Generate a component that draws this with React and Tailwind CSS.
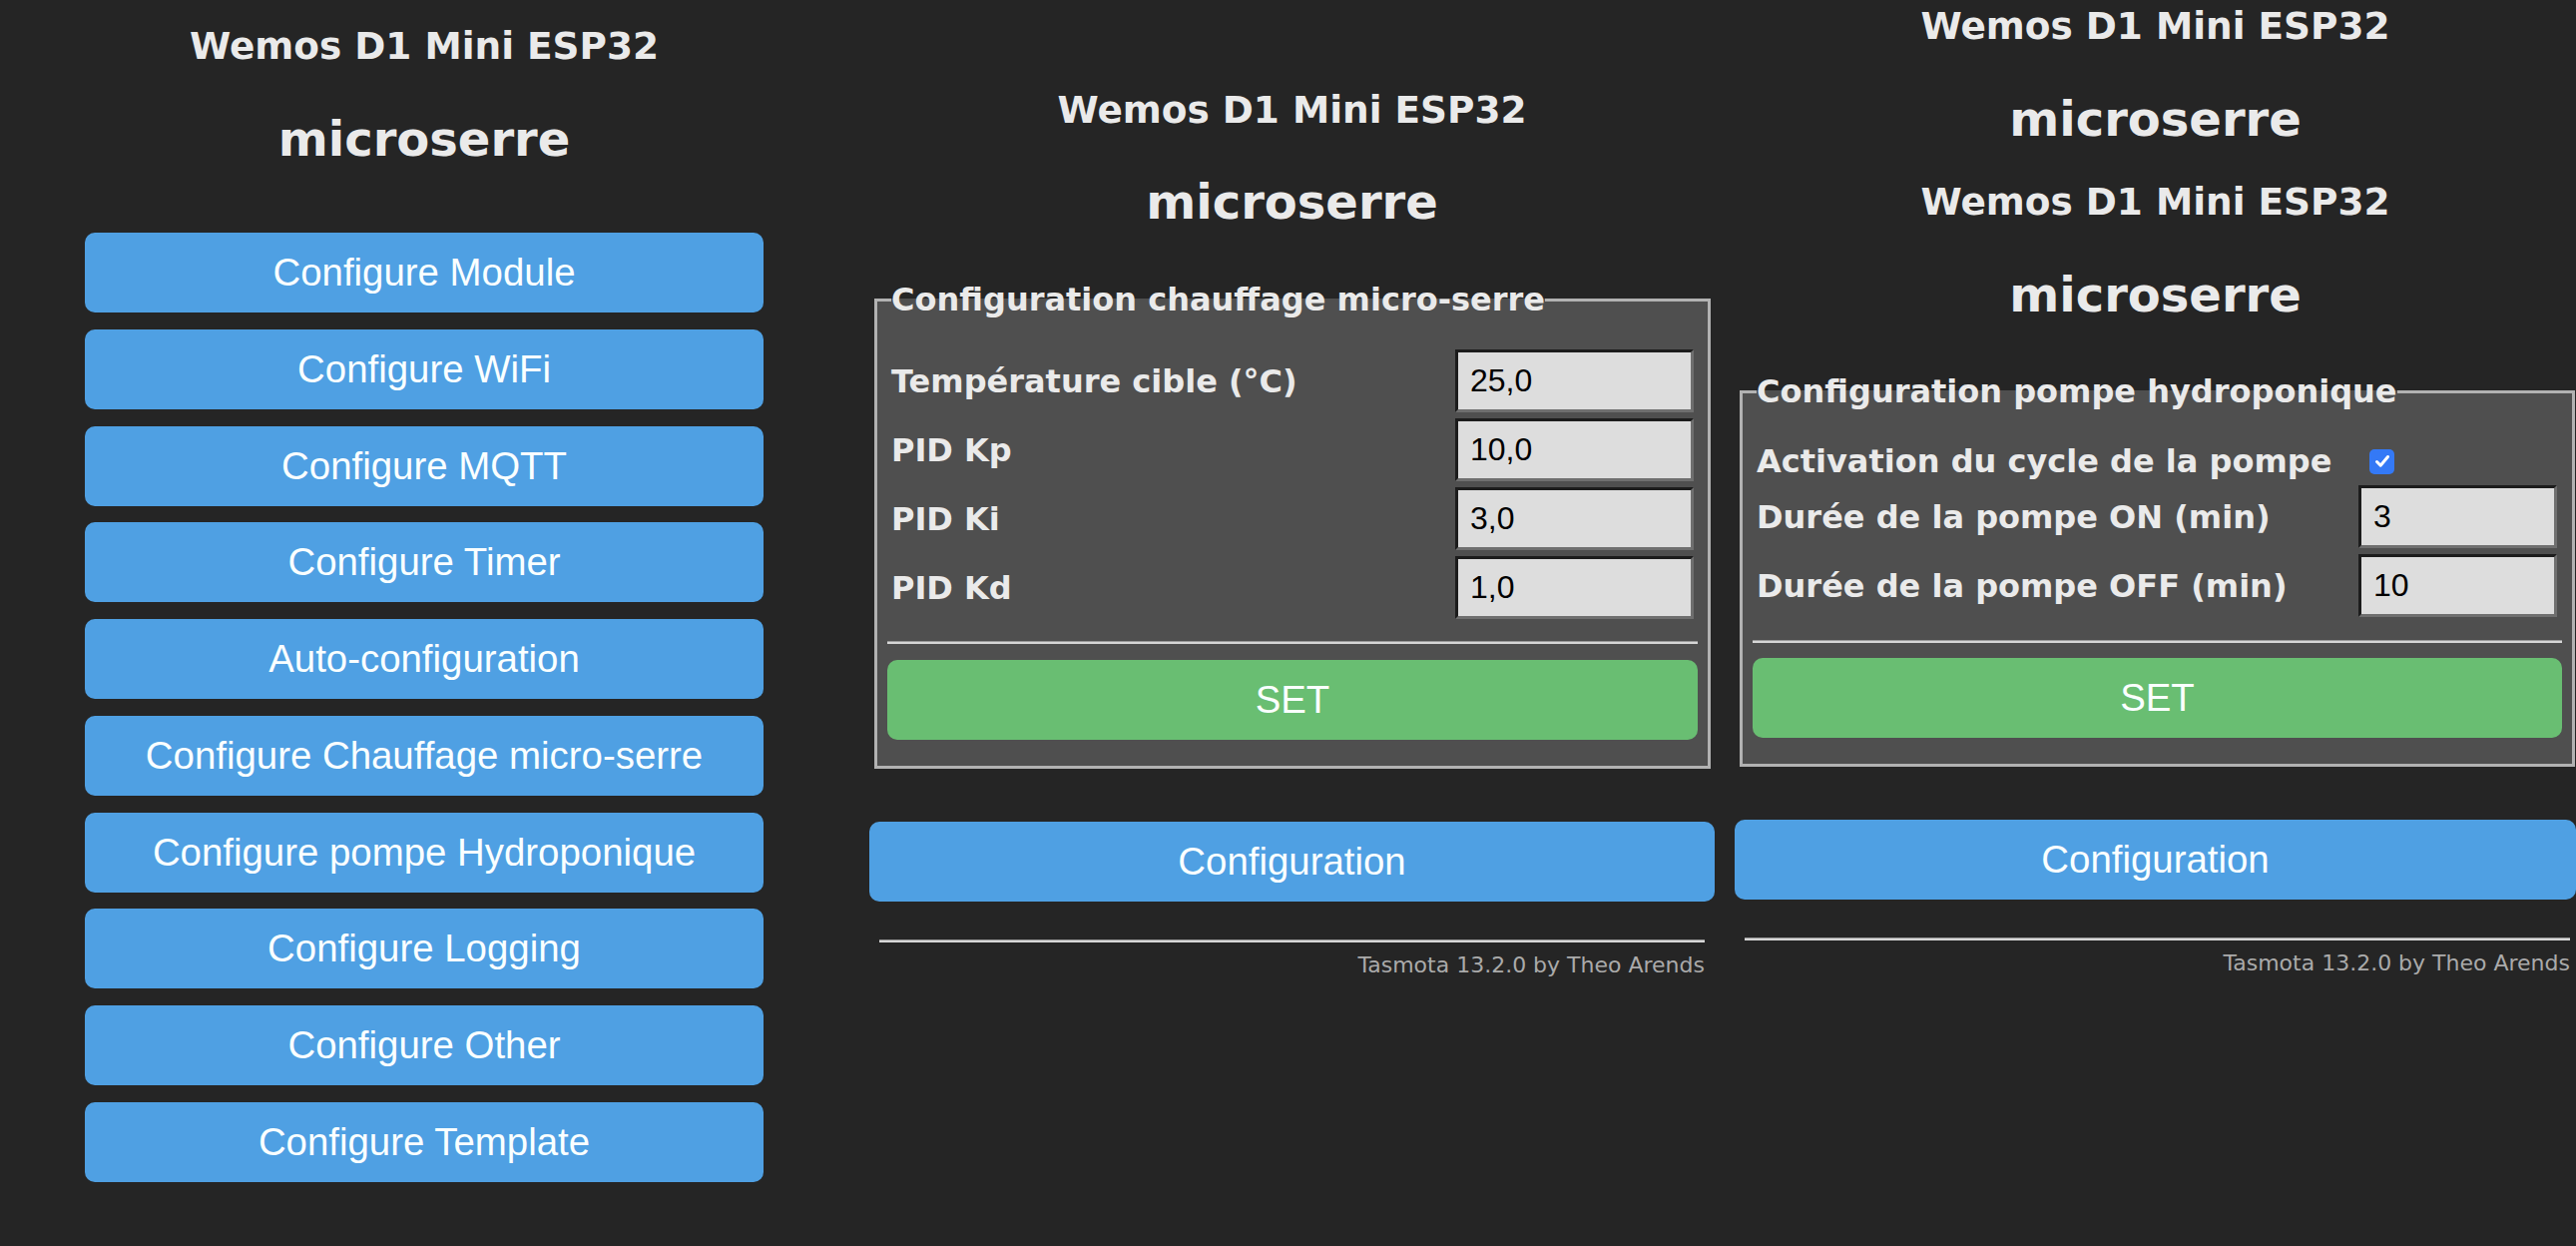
import React from 'react';

const Btn = ({ children, className = '' }) => (
    <button className={`block w-full h-[80px] rounded-[10px] text-[#faffff] text-[38.4px] font-['Liberation_Sans',Arial,sans-serif] ${className}`}>
        {children}
    </button>
);

const Title = ({ className = '' }) => (
    <div className={`h-[44px] leading-[44px] text-[37.44px] font-bold text-center whitespace-nowrap ${className}`}>
        Wemos D1 Mini ESP32
    </div>
);

const Name = ({ className = '' }) => (
    <div className={`h-[56px] leading-[56px] text-[48px] font-bold text-center ${className}`}>microserre</div>
);

const Field = ({ value, width }) => (
    <input
        readOnly
        defaultValue={value}
        className={`${width} h-[63px] shrink-0 bg-[#dddddd] text-black text-[32px] pl-[12px] font-['Liberation_Sans',Arial,sans-serif] border-[3px] border-t-[#1c1c1c] border-l-[#1c1c1c] border-r-[#6f6f6f] border-b-[#6f6f6f] outline-none`}
    />
);

const Rule = ({ className = '' }) => <div className={`h-[3px] bg-[#d6d6d6] border-t border-[#9a9a9a] ${className}`} />;

const Footer = ({ hrClass }) => (
    <div>
        <Rule className={`mt-[38px] ${hrClass}`} />
        <div className={`mt-[10px] text-right text-[22px] leading-[26px] text-[#aaaaaa] ${hrClass}`}>
            Tasmota 13.2.0 by Theo Arends
        </div>
    </div>
);

const menu = [
    'Configure Module',
    'Configure WiFi',
    'Configure MQTT',
    'Configure Timer',
    'Auto-configuration',
    'Configure Chauffage micro-serre',
    'Configure pompe Hydroponique',
    'Configure Logging',
    'Configure Other',
    'Configure Template',
];

const heating = [
    ['Température cible (°C)', '25,0'],
    ['PID Kp', '10,0'],
    ['PID Ki', '3,0'],
    ['PID Kd', '1,0'],
];

export default function App() {
    return (
        <div className="w-[2581px] h-[1248px] overflow-hidden flex bg-[#252525] text-[#eaeaea] font-['DejaVu_Sans',Verdana,sans-serif]">
            {/* main menu */}
            <div className="w-[850px] shrink-0 flex flex-col items-center pt-[24px]">
                <Title />
                <Name className="mt-[43px]" />
                <div className="w-[680px] mt-[66px] flex flex-col gap-[16.75px]">
                    {menu.map(label => (
                        <Btn key={label} className="bg-[#4fa0e3]">{label}</Btn>
                    ))}
                </div>
            </div>

            {/* chauffage */}
            <div className="w-[888px] shrink-0 pl-[21px] pr-[20px] pt-[88px]">
                <div className="w-[847px]">
                    <Title />
                    <Name className="mt-[42px]" />
                    <fieldset className="mt-[51px] ml-[5px] mr-[4px] bg-[#4f4f4f] border-[3px] border-[#b2b2b2] px-[10px] pt-[31px] pb-[26px]">
                        <legend className="ml-[4px] p-0 h-[38px] leading-[38px] text-[32px] font-bold">
                            Configuration chauffage micro-serre
                        </legend>
                        <div className="flex flex-col gap-[6px] px-[4px]">
                            {heating.map(([label, value]) => (
                                <div key={label} className="flex items-center justify-between">
                                    <span className="text-[32px] font-bold">{label}</span>
                                    <Field value={value} width="w-[239px]" />
                                </div>
                            ))}
                        </div>
                        <Rule className="mt-[22px]" />
                        <Btn className="mt-[16px] bg-[#69be72]">SET</Btn>
                    </fieldset>
                    <Btn className="mt-[53px] bg-[#4fa0e3]">Configuration</Btn>
                    <Footer hrClass="mx-[10px]" />
                </div>
            </div>

            {/* pompe */}
            <div className="w-[843px] shrink-0 pt-[4px]">
                <Title />
                <Name className="mt-[43px]" />
                <Title className="mt-[33px]" />
                <Name className="mt-[43px]" />
                <fieldset className="mt-[50px] ml-[5px] mr-[1px] bg-[#4f4f4f] border-[3px] border-[#b2b2b2] px-[10px] pt-[33px] pb-[26px]">
                    <legend className="ml-[4px] p-0 h-[38px] leading-[38px] text-[32px] font-bold">
                        Configuration pompe hydroponique
                    </legend>
                    <div className="flex flex-col gap-[6px] pl-[4px] pr-[5px]">
                        <div className="h-[36px] flex items-center justify-between">
                            <span className="text-[32px] font-bold">Activation du cycle de la pompe</span>
                            <div className="w-[199px] flex items-center">
                                <span className="ml-[11px] w-[25px] h-[25px] rounded-[5px] bg-[#3479f6] flex items-center justify-center">
                                    <svg width="18" height="18" viewBox="0 0 18 18" fill="none">
                                        <path d="M3.5 9.5 L7.2 13.2 L14.5 4.5" stroke="#ffffff" strokeWidth="3" strokeLinecap="round" strokeLinejoin="round" />
                                    </svg>
                                </span>
                            </div>
                        </div>
                        <div className="flex items-center justify-between">
                            <span className="text-[32px] font-bold">Durée de la pompe ON (min)</span>
                            <Field value="3" width="w-[199px]" />
                        </div>
                        <div className="flex items-center justify-between">
                            <span className="text-[32px] font-bold">Durée de la pompe OFF (min)</span>
                            <Field value="10" width="w-[199px]" />
                        </div>
                    </div>
                    <Rule className="mt-[23px]" />
                    <Btn className="mt-[15px] bg-[#69be72]">SET</Btn>
                </fieldset>
                <Btn className="mt-[53px] bg-[#4fa0e3]">Configuration</Btn>
                <Footer hrClass="ml-[10px] mr-[6px]" />
            </div>
        </div>
    );
}
